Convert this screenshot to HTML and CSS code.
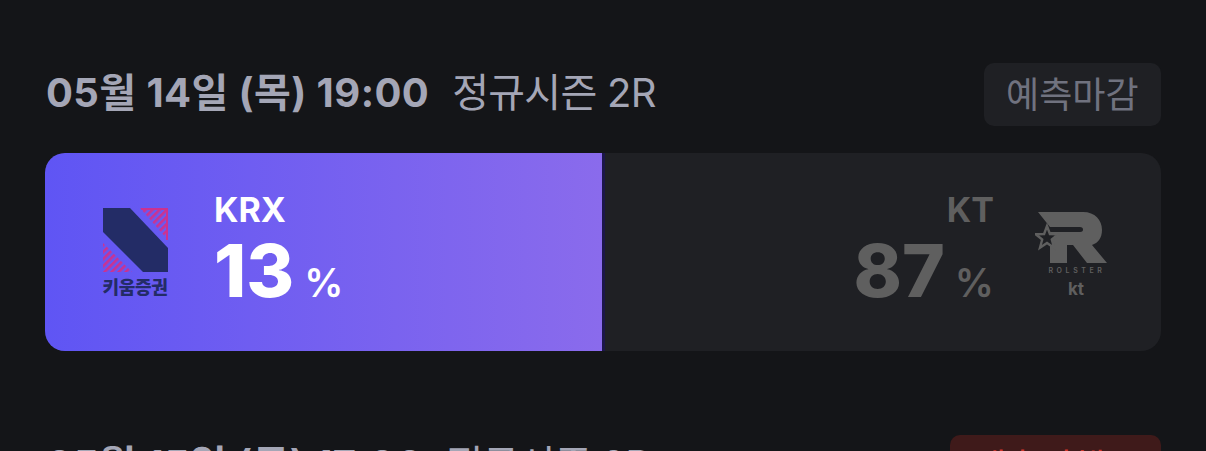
FILE: index.html
```html
<!DOCTYPE html>
<html lang="ko">
<head>
  <meta charset="utf-8">
  <title>승부예측</title>
  <link rel="stylesheet" href="styles.css">
</head>
<body>
  <div class="match">
    <div class="match-head">
      <div class="match-info">
        <span class="match-date">05월 14일 (목) 19:00</span>
        <span class="match-round">정규시즌 2R</span>
      </div>
      <div class="status">예측마감</div>
    </div>
    <div class="vote">
      <div class="side side-home">
        <svg class="logo-krx" viewBox="0 0 66 64" width="66" height="64">
          <defs>
            <pattern id="hatch" width="5" height="5" patternUnits="userSpaceOnUse" patternTransform="rotate(-45)">
              <rect width="5" height="2.6" fill="#cb3290"></rect>
            </pattern>
          </defs>
          <path d="M37 0H65V32Z" fill="url(#hatch)"></path>
          <path d="M38 0H65V32H63V2H38Z" fill="#cb3290"></path>
          <path d="M0 35V64H29Z" fill="url(#hatch)"></path>
          <path d="M0 0H27L65 40V64H40L0 24Z" fill="#232c66"></path>
        </svg>
        <div class="logo-krx-name">키움증권</div>
        <div class="score score-home">
          <div class="team">KRX</div>
          <div class="percent"><span class="num">13</span><span class="unit">%</span></div>
        </div>
      </div>
      <div class="side side-away">
        <div class="score score-away">
          <div class="team">KT</div>
          <div class="percent"><span class="num">87</span><span class="unit">%</span></div>
        </div>
        <div class="logo-kt">
          <svg viewBox="0 0 74 52" width="74" height="52">
            <path d="M3 0H48C60 0 67 8 67 18C67 26 63 31 57 33L72 51H52L38 33H32V51H15V20H45C47.5 20 48 19 48 17.5C48 16 47 15 45 15H15Z" fill="#5f5f5f"></path>
            <path d="M12 14L14.9 22L23.4 22.3L16.8 27.5L19 35.7L12 31L5 35.7L7.2 27.5L.6 22.3L9.1 22Z" fill="#1f2024" stroke="#5f5f5f" stroke-width="2.4"></path>
          </svg>
          <div class="rolster">ROLSTER</div>
          <div class="kt">kt</div>
        </div>
      </div>
    </div>
  </div>
  <div class="match match-next">
    <div class="match-head">
      <div class="match-info">
        <span class="match-date">05월 15일 (금) 17:00</span>
        <span class="match-round">정규시즌 2R</span>
      </div>
      <div class="status status-live">예측진행중</div>
    </div>
  </div>
</body>
</html>
```

FILE: styles.css
```css
html, body {
  height: 100%;
}

body {
  margin: 0;
  padding: 63px 45px 0;
  box-sizing: border-box;
  overflow: hidden;
  background-color: #141518;
  font-family: Inter, "Noto Sans CJK KR", sans-serif;
  color: #a4a6b6;
}

.match-head {
  display: flex;
  justify-content: space-between;
  align-items: center;
  height: 63px;
}

.match-info {
  display: flex;
  align-items: center;
  gap: 23px;
  margin-left: 1px;
  padding-bottom: 10px;
}

.match-date {
  font-size: 40px;
  font-weight: 700;
  letter-spacing: 0.4px;
}

.match-round {
  font-size: 40px;
  font-weight: 400;
  letter-spacing: -0.7px;
}

.status {
  display: flex;
  align-items: center;
  padding: 0 22.5px 5px;
  height: 63px;
  box-sizing: border-box;
  border-radius: 10px;
  background-color: #1f2024;
  color: #70727f;
  font-size: 36px;
}

.status-live {
  background-color: #3f1a1a;
  color: #d0362c;
}

.vote {
  display: flex;
  margin-top: 27px;
  height: 198px;
  border-radius: 20px;
  overflow: hidden;
  background-color: #1f2024;
}

.side {
  display: flex;
  align-items: center;
  position: relative;
}

.side-home {
  width: 557px;
  background: linear-gradient(90deg, #5f55f4, #8a6bec);
  border-right: 3px solid #1c1649;
}

.side-away {
  flex: 1;
  justify-content: flex-end;
  color: #5f5f5f;
}

.logo-krx {
  position: absolute;
  left: 57.5px;
  top: 55px;
}

.logo-krx-name {
  position: absolute;
  left: 57px;
  top: 120px;
  width: 66px;
  text-align: center;
  font-size: 18px;
  font-weight: 800;
  letter-spacing: -0.3px;
  color: #232c66;
}

.score {
  display: flex;
  flex-direction: column;
  padding-top: 8px;
}

.score-home {
  margin-left: 169px;
  color: #fff;
}

.score-away {
  align-items: flex-end;
  margin-right: 41px;
}

.team {
  font-size: 34px;
  font-weight: 700;
  line-height: 34px;
  margin-bottom: 7px;
}

.percent {
  display: flex;
  align-items: baseline;
  gap: 10px;
  line-height: 74px;
}

.num {
  font-size: 73px;
  font-weight: 800;
}

.unit {
  font-size: 39px;
  font-weight: 600;
}

.logo-kt {
  display: flex;
  flex-direction: column;
  align-items: center;
  width: 74px;
  margin-right: 52px;
  margin-top: 6px;
}

.rolster {
  font-size: 7px;
  font-weight: 600;
  letter-spacing: 3.6px;
  line-height: 10px;
  margin: 2px 0 0 10px;
}

.kt {
  font-size: 17px;
  font-weight: 700;
  line-height: 20px;
  margin: 3px 0 0 8px;
}

.match-next {
  margin-top: 84px;
}
```
